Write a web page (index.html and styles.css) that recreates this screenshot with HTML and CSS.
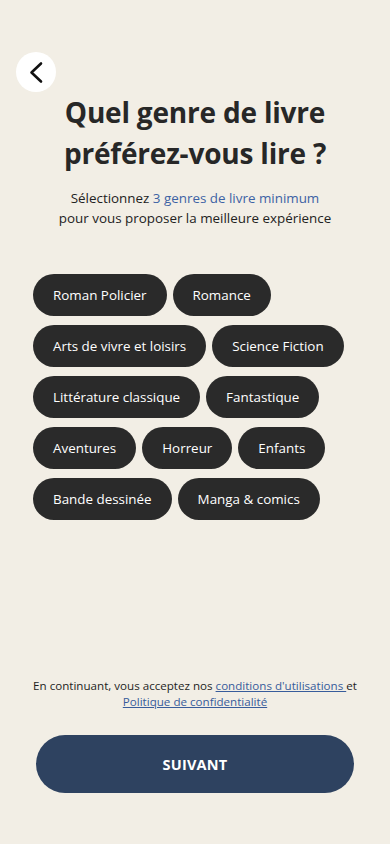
FILE: index.html
```html
<!DOCTYPE html>
<html lang="fr">
<head>
<meta charset="utf-8">
<meta name="viewport" content="width=device-width, initial-scale=1">
<title>Genres</title>
<link rel="stylesheet" href="styles.css">
</head>
<body>
<div class="screen">
  <header class="top">
    <button class="back" aria-label="Retour">
      <svg width="40" height="40" viewBox="0 0 40 40"><path d="M25 11.5 L15.5 20.5 L25 29.5" fill="none" stroke="#111" stroke-width="2.6" stroke-linecap="round" stroke-linejoin="round"/></svg>
    </button>
  </header>
  <h1 class="title">Quel genre de livre<br>préférez-vous lire ?</h1>
  <p class="subtitle">Sélectionnez <span class="accent">3 genres de livre minimum</span><br>pour vous proposer la meilleure expérience</p>
  <div class="chips">
    <button class="chip">Roman Policier</button>
    <button class="chip">Romance</button>
    <button class="chip">Arts de vivre et loisirs</button>
    <button class="chip">Science Fiction</button>
    <button class="chip">Littérature classique</button>
    <button class="chip">Fantastique</button>
    <button class="chip">Aventures</button>
    <button class="chip">Horreur</button>
    <button class="chip">Enfants</button>
    <button class="chip">Bande dessinée</button>
    <button class="chip">Manga &amp; comics</button>
  </div>
  <footer class="bottom">
    <p class="legal">En continuant, vous acceptez nos <a href="#">conditions d'utilisations </a>et<br><a href="#">Politique de confidentialité</a></p>
    <button class="next">SUIVANT</button>
  </footer>
</div>
</body>
</html>
```

FILE: styles.css
```css
* { box-sizing: border-box; }
html, body { margin: 0; padding: 0; }
body {
  background: #f2eee5;
  font-family: "Open Sans", "Noto Sans", sans-serif;
  color: #262626;
}
.screen {
  min-height: 844px;
  display: flex;
  flex-direction: column;
}
.top {
  padding: 52px 0 0 16px;
}
.back {
  width: 40px;
  height: 40px;
  border-radius: 50%;
  background: #ffffff;
  border: none;
  padding: 0;
  display: flex;
  align-items: center;
  justify-content: center;
}
.title {
  margin: 0;
  text-align: center;
  font-size: 28px;
  line-height: 41px;
  font-weight: 700;
  color: #272727;
  letter-spacing: -0.2px;
}
.subtitle {
  margin: 15px 0 0;
  text-align: center;
  font-size: 13.4px;
  line-height: 19.5px;
  color: #222222;
}
.accent { color: #3d62a4; }
.chips {
  margin: 46px 0 0 33px;
  width: 324px;
  display: flex;
  flex-wrap: wrap;
  column-gap: 6px;
  row-gap: 9px;
}
.chip {
  height: 42px;
  padding: 0 20px;
  border: none;
  border-radius: 21px;
  background: #2a2a2a;
  color: #ffffff;
  font-family: inherit;
  font-size: 13.4px;
  white-space: nowrap;
}
.bottom {
  margin-top: auto;
  padding: 0 0 51px;
  display: flex;
  flex-direction: column;
  align-items: center;
}
.legal {
  margin: 0;
  text-align: center;
  font-size: 11.6px;
  line-height: 16px;
  color: #1e1e1e;
}
.legal a {
  color: #385c9b;
  text-decoration: underline;
}
.next {
  margin-top: 25px;
  width: 318px;
  height: 58px;
  border: none;
  border-radius: 29px;
  background: #2e4260;
  color: #ffffff;
  font-family: inherit;
  font-weight: 700;
  font-size: 14.5px;
  letter-spacing: 0.2px;
}
```
